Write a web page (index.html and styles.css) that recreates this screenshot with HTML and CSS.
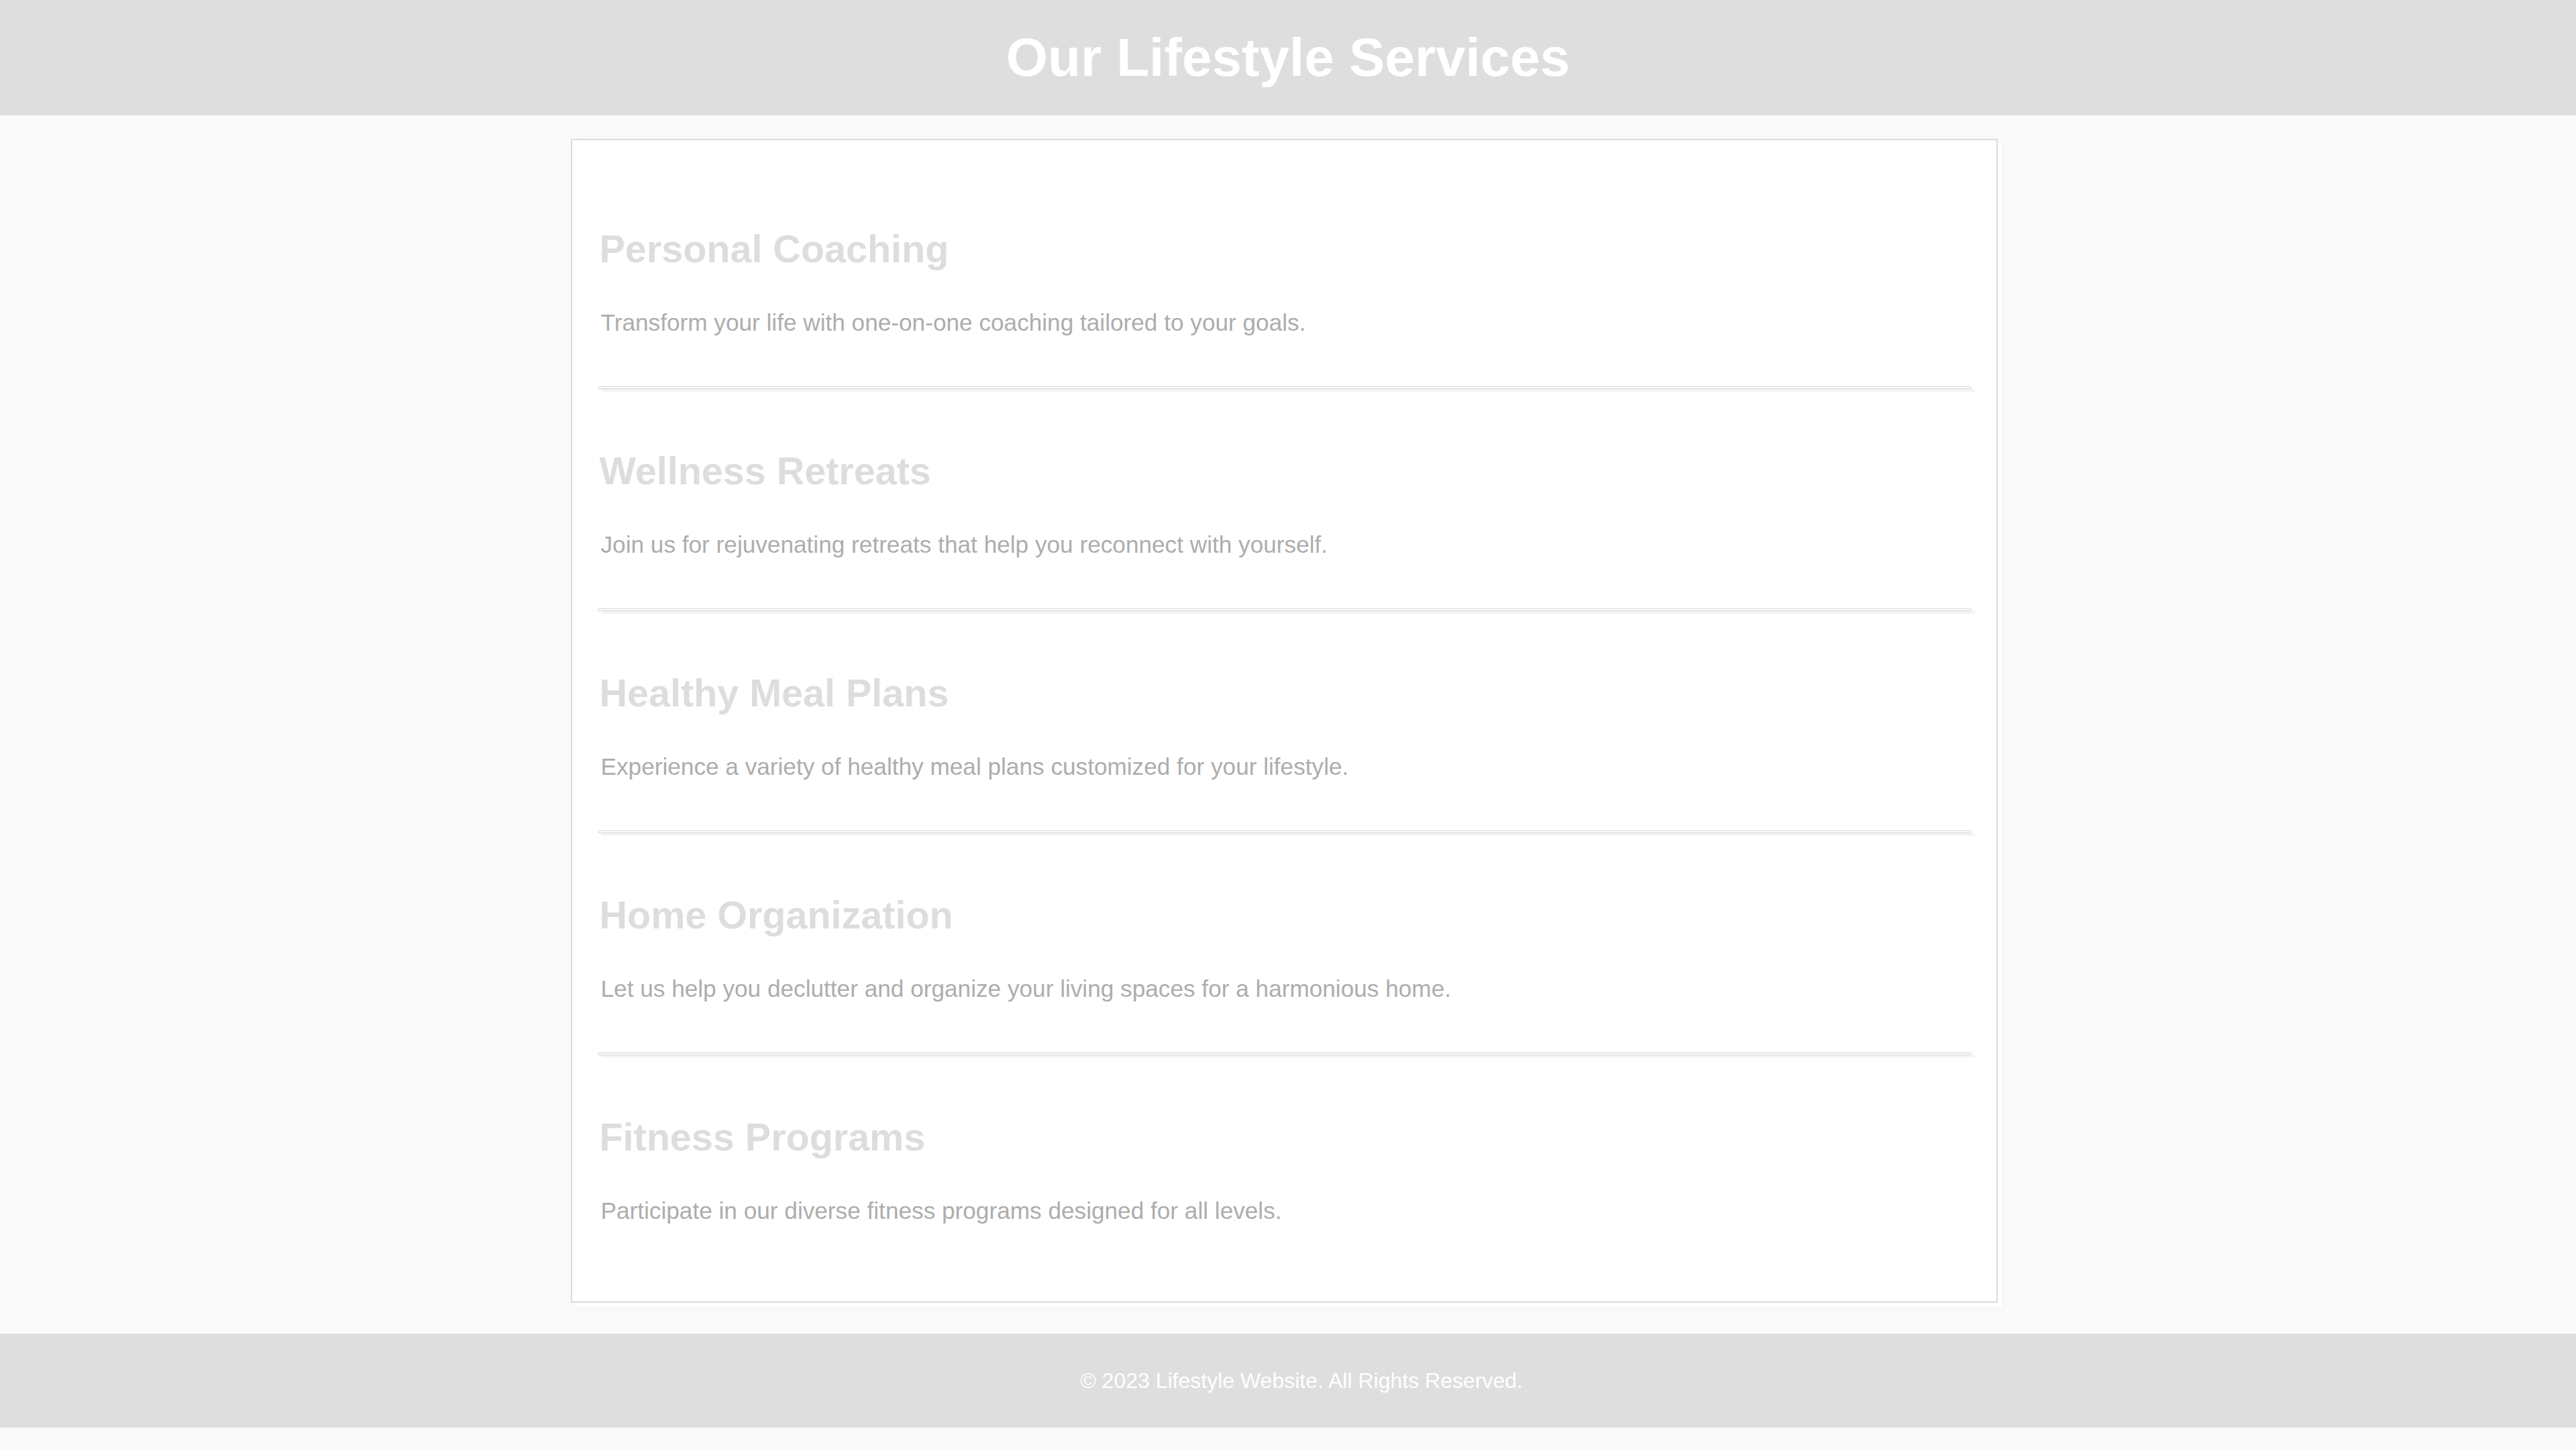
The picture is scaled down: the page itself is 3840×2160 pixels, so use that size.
FILE: index.html
```html
<!DOCTYPE html>
<html lang="en">
<head>
<meta charset="utf-8">
<title>Our Lifestyle Services</title>
<link rel="stylesheet" href="styles.css">
</head>
<body>
<header class="site-header">
  <h1 class="site-title">Our Lifestyle Services</h1>
</header>
<div class="main-wrap">
  <main class="services">
    <section class="service">
      <h2 class="service-title">Personal Coaching</h2>
      <p class="service-text">Transform your life with one-on-one coaching tailored to your goals.</p>
    </section>
    <div class="divider"></div>
    <section class="service">
      <h2 class="service-title">Wellness Retreats</h2>
      <p class="service-text">Join us for rejuvenating retreats that help you reconnect with yourself.</p>
    </section>
    <div class="divider"></div>
    <section class="service">
      <h2 class="service-title">Healthy Meal Plans</h2>
      <p class="service-text">Experience a variety of healthy meal plans customized for your lifestyle.</p>
    </section>
    <div class="divider"></div>
    <section class="service">
      <h2 class="service-title">Home Organization</h2>
      <p class="service-text">Let us help you declutter and organize your living spaces for a harmonious home.</p>
    </section>
    <div class="divider"></div>
    <section class="service">
      <h2 class="service-title">Fitness Programs</h2>
      <p class="service-text">Participate in our diverse fitness programs designed for all levels.</p>
    </section>
  </main>
</div>
<footer class="site-footer">
  <p class="footer-text">&copy; 2023 Lifestyle Website. All Rights Reserved.</p>
</footer>
</body>
</html>
```

FILE: styles.css
```css
html, body {
  margin: 0;
  padding: 0;
}

body {
  background: #fafafa;
  font-family: "Liberation Sans", Arial, sans-serif;
}

.site-header {
  background: #dedede;
  padding: 40px 0;
  text-align: center;
}

.site-title {
  margin: 0;
  font-size: 80px;
  line-height: 92px;
  font-weight: bold;
  color: #ffffff;
}

.main-wrap {
  display: flex;
  justify-content: center;
  padding: 35px 11px 46px 0;
}

.services {
  box-sizing: border-box;
  width: 2127px;
  background: #ffffff;
  border: 2px solid #dcdcdc;
  padding: 40px 37.5px 40px;
  box-shadow: 6px 6px 0 #ffffff, 6px 8px 18px rgba(0, 0, 0, 0.04);
}

.service {
  padding: 37.5px 0 45.5px;
}

.service-title {
  margin: 50px 0 55px;
  padding: 0 3px;
  font-size: 57.5px;
  line-height: 69px;
  font-weight: bold;
  color: #dddddd;
}

.service-text {
  margin: 0 0 30px;
  padding: 0 5px;
  font-size: 35.2px;
  line-height: 40px;
  color: #adadad;
}

.divider {
  box-sizing: border-box;
  height: 4px;
  border: 1px solid #d4d4d4;
  border-radius: 3px;
  background: #ffffff;
  box-shadow: 5px 4px 0 #f4f4f4;
}

.site-footer {
  background: #dedede;
  padding: 50px 0 50px 40px;
  text-align: center;
}

.footer-text {
  margin: 0;
  font-size: 32px;
  line-height: 40px;
  color: #ffffff;
}
```
